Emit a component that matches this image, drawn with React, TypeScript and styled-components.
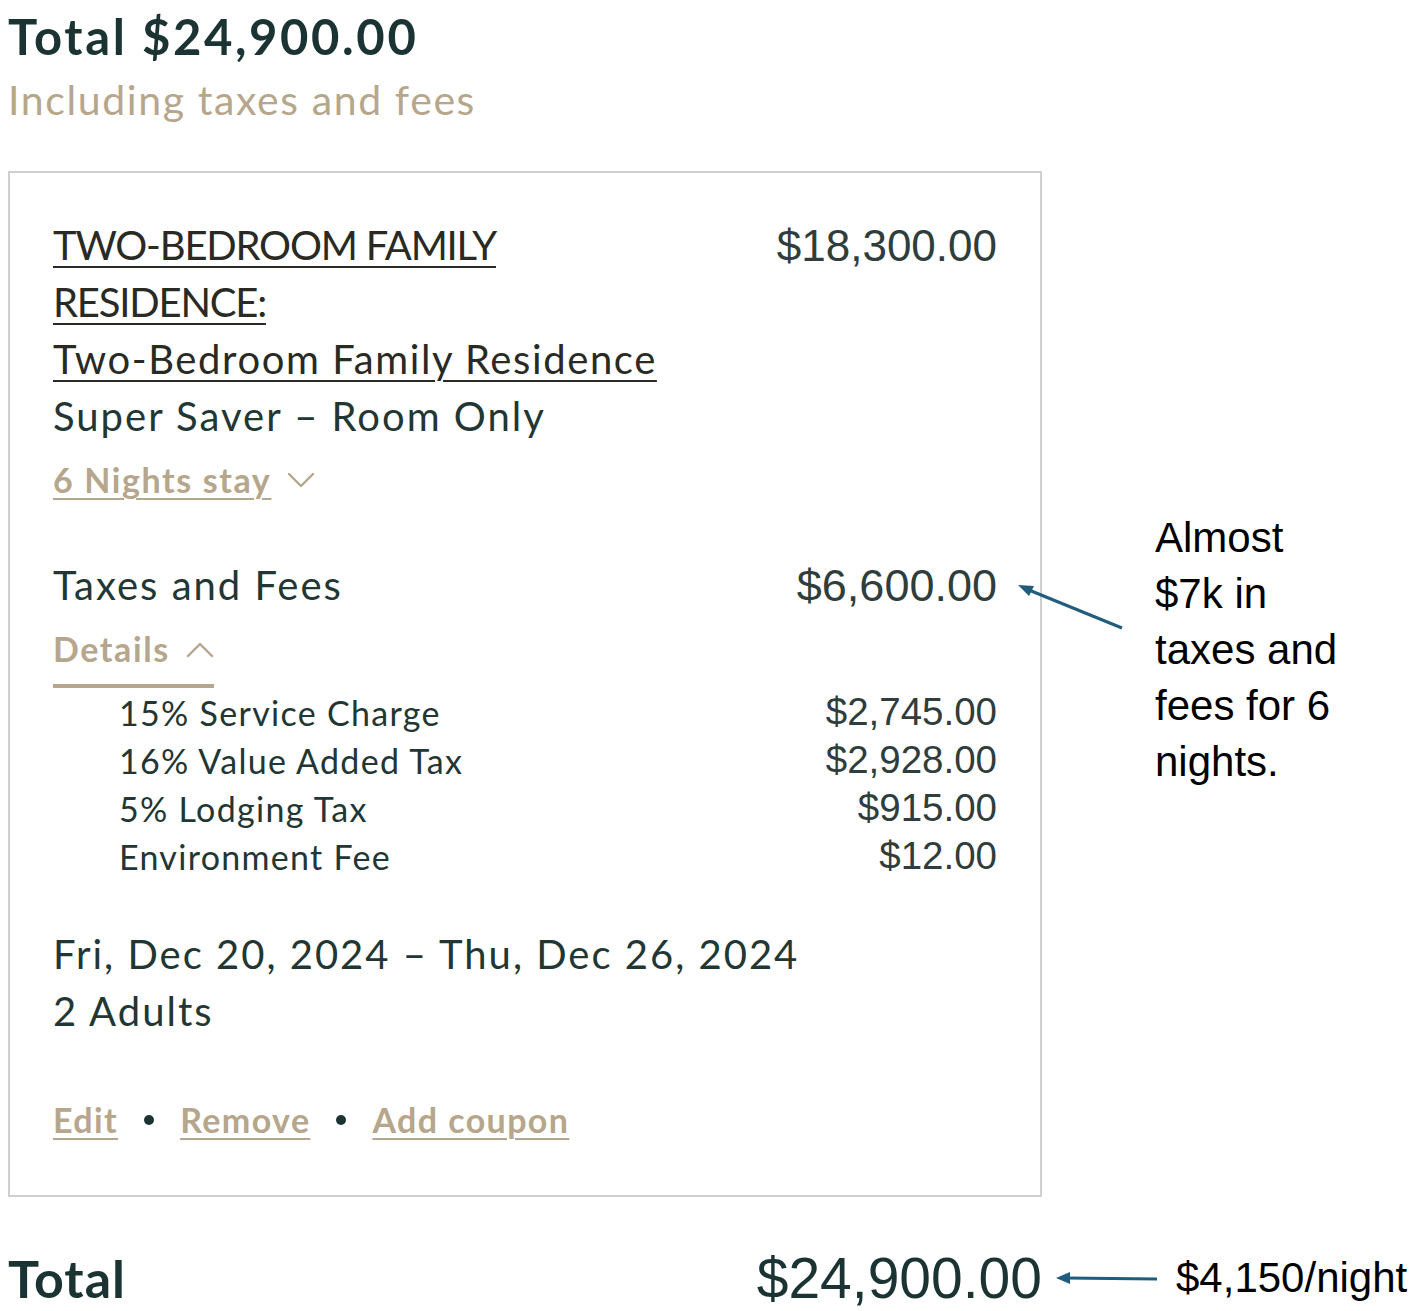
import React from "react";
import styled, { createGlobalStyle } from "styled-components";

const GlobalStyle = createGlobalStyle`
  html, body {
    margin: 0;
    padding: 0;
    background: #ffffff;
    overflow-x: hidden;
  }
  body {
    font-family: "Lato", "Noto Sans", sans-serif;
    color: #223634;
  }
`;

const DARK = "#223634";
const TAN = "#b6a68b";
const ARROW = "#1f5c7e";

const Page = styled.div`
  display: grid;
  grid-template-columns: 1034px 1fr;
  padding: 4px 0 0 8px;
  width: 1420px;
  box-sizing: border-box;
  overflow: hidden;
`;

const Header = styled.div`
  grid-column: 1;
  margin-bottom: 39px;
`;

const HeadTotal = styled.div`
  font-size: 49px;
  line-height: 64px;
  font-weight: 700;
  letter-spacing: 2.6px;
  color: #1b3433;
`;

const HeadSub = styled.div`
  font-size: 41px;
  line-height: 64px;
  letter-spacing: 1.6px;
  color: ${TAN};
`;

const Card = styled.div`
  grid-column: 1;
  border: 2px solid #cfcfcf;
  padding: 44px 43px 50px 43px;
  display: flex;
  flex-direction: column;
`;

const Row = styled.div<{ $mt?: number }>`
  display: flex;
  justify-content: space-between;
  align-items: flex-start;
  margin-top: ${(p) => p.$mt ?? 0}px;
`;

const TitleBlock = styled.div`
  display: flex;
  flex-direction: column;
`;

const RoomLink = styled.span<{ $tight?: boolean }>`
  font-size: 40px;
  line-height: 57px;
  font-weight: 400;
  color: #2a2a24;
  letter-spacing: ${(p) => (p.$tight ? "-1.2px" : "1.6px")};
  text-decoration: underline;
  text-decoration-thickness: 2px;
  text-underline-offset: 6px;
`;

const Label = styled.div`
  font-size: 40px;
  line-height: 57px;
  letter-spacing: 2px;
  color: ${DARK};
`;

const Price = styled.div<{ $size?: number }>`
  font-family: "Liberation Sans", Arial, sans-serif;
  font-size: ${(p) => p.$size ?? 44}px;
  line-height: 57px;
  color: #2f3d3c;
  white-space: nowrap;
`;

const Toggle = styled.div<{ $underline?: boolean; $bar?: boolean; $mt?: number }>`
  align-self: flex-start;
  display: flex;
  align-items: center;
  gap: 16px;
  font-size: 34px;
  line-height: 50px;
  font-weight: 700;
  letter-spacing: 1.6px;
  color: ${TAN};
  margin-top: ${(p) => p.$mt ?? 0}px;
  padding-bottom: ${(p) => (p.$bar ? 10 : 0)}px;
  border-bottom: ${(p) => (p.$bar ? `4px solid ${TAN}` : "none")};
  span {
    text-decoration: ${(p) => (p.$underline ? "underline" : "none")};
    text-decoration-thickness: 2px;
    text-underline-offset: 5px;
  }
`;

const FeeList = styled.div`
  display: flex;
  flex-direction: column;
  padding-left: 66px;
`;

const FeeRow = styled.div`
  display: flex;
  justify-content: space-between;
  align-items: center;
  height: 48px;
`;

const FeeLabel = styled.span`
  font-size: 34px;
  letter-spacing: 1.3px;
  color: ${DARK};
`;

const FeePrice = styled.span`
  font-family: "Liberation Sans", Arial, sans-serif;
  font-size: 38.5px;
  color: #2f3d3c;
`;

const StayInfo = styled.div`
  display: flex;
  flex-direction: column;
  margin-top: 46px;
`;

const Actions = styled.div`
  display: flex;
  align-items: center;
  gap: 26px;
  margin-top: 55px;
  font-size: 34px;
  line-height: 50px;
  font-weight: 700;
  letter-spacing: 1.4px;
`;

const ActionLink = styled.a`
  color: ${TAN};
  text-decoration: underline;
  text-decoration-thickness: 2px;
  text-underline-offset: 5px;
  cursor: pointer;
`;

const Dot = styled.span`
  width: 10px;
  height: 10px;
  border-radius: 50%;
  background: #1b3433;
`;

const SideNote = styled.div`
  grid-column: 2;
  grid-row: 2;
  position: relative;
  align-self: start;
  margin-top: 339px;
  padding-left: 113px;
`;

const NoteText = styled.div`
  font-family: "Liberation Sans", Arial, sans-serif;
  font-size: 42px;
  line-height: 56px;
  color: #000;
`;

const NoteArrow = styled.svg`
  position: absolute;
  left: -26px;
  top: 72px;
`;

const TotalRow = styled.div`
  grid-column: 1;
  display: flex;
  justify-content: space-between;
  align-items: center;
  margin-top: 49px;
  height: 64px;
`;

const TotalLabel = styled.div`
  font-size: 52px;
  font-weight: 700;
  letter-spacing: 1px;
  color: #1b3433;
`;

const TotalPrice = styled.div`
  font-family: "Liberation Sans", Arial, sans-serif;
  font-size: 57px;
  color: #1b3433;
`;

const TotalNote = styled.div`
  grid-column: 2;
  display: flex;
  align-items: center;
  margin-top: 49px;
  height: 64px;
  padding-left: 14px;
  gap: 18px;
  white-space: nowrap;
`;

const NoteInline = styled.span`
  font-family: "Liberation Sans", Arial, sans-serif;
  font-size: 42px;
  color: #000;
`;

const Chevron = ({ up }: { up?: boolean }) => (
  <svg width="28" height="18" viewBox="0 0 28 18" fill="none">
    <path
      d={up ? "M2 16 L14 4 L26 16" : "M2 3 L14 15 L26 3"}
      stroke={TAN}
      strokeWidth="2.4"
      strokeLinecap="round"
      strokeLinejoin="round"
    />
  </svg>
);

const fees = [
  { label: "15% Service Charge", amount: "$2,745.00" },
  { label: "16% Value Added Tax", amount: "$2,928.00" },
  { label: "5% Lodging Tax", amount: "$915.00" },
  { label: "Environment Fee", amount: "$12.00" },
];

const App = () => {
  return (
    <>
      <GlobalStyle />
      <Page>
        <Header>
          <HeadTotal>Total $24,900.00</HeadTotal>
          <HeadSub>Including taxes and fees</HeadSub>
        </Header>

        <Card>
          <Row>
            <TitleBlock>
              <div>
                <RoomLink $tight>TWO-BEDROOM FAMILY</RoomLink>
              </div>
              <div>
                <RoomLink $tight>RESIDENCE:</RoomLink>
              </div>
              <div>
                <RoomLink>Two-Bedroom Family Residence</RoomLink>
              </div>
              <Label>Super Saver – Room Only</Label>
            </TitleBlock>
            <Price>$18,300.00</Price>
          </Row>
          <Toggle $underline $mt={10}>
            <span>6 Nights stay</span>
            <Chevron />
          </Toggle>

          <Row $mt={52}>
            <Label>Taxes and Fees</Label>
            <Price $size={45}>$6,600.00</Price>
          </Row>
          <Toggle $bar $mt={10}>
            <span>Details</span>
            <Chevron up />
          </Toggle>
          <FeeList>
            {fees.map((f) => (
              <FeeRow key={f.label}>
                <FeeLabel>{f.label}</FeeLabel>
                <FeePrice>{f.amount}</FeePrice>
              </FeeRow>
            ))}
          </FeeList>

          <StayInfo>
            <Label>Fri, Dec 20, 2024 – Thu, Dec 26, 2024</Label>
            <Label>2 Adults</Label>
          </StayInfo>

          <Actions>
            <ActionLink>Edit</ActionLink>
            <Dot />
            <ActionLink>Remove</ActionLink>
            <Dot />
            <ActionLink>Add coupon</ActionLink>
          </Actions>
        </Card>

        <SideNote>
          <NoteArrow width="112" height="52" viewBox="0 0 112 52">
            <line x1="8" y1="6" x2="106" y2="46" stroke={ARROW} strokeWidth="3" />
            <path d="M2 3 L18 4 L13 14 Z" fill={ARROW} />
          </NoteArrow>
          <NoteText>
            Almost
            <br />
            $7k in
            <br />
            taxes and
            <br />
            fees for 6
            <br />
            nights.
          </NoteText>
        </SideNote>

        <TotalRow>
          <TotalLabel>Total</TotalLabel>
          <TotalPrice>$24,900.00</TotalPrice>
        </TotalRow>
        <TotalNote>
          <svg width="102" height="16" viewBox="0 0 102 16">
            <line x1="10" y1="8" x2="101" y2="9" stroke={ARROW} strokeWidth="3" />
            <path d="M0 8 L14 2 L14 14 Z" fill={ARROW} />
          </svg>
          <NoteInline>$4,150/night</NoteInline>
        </TotalNote>
      </Page>
    </>
  );
};

export default App;
